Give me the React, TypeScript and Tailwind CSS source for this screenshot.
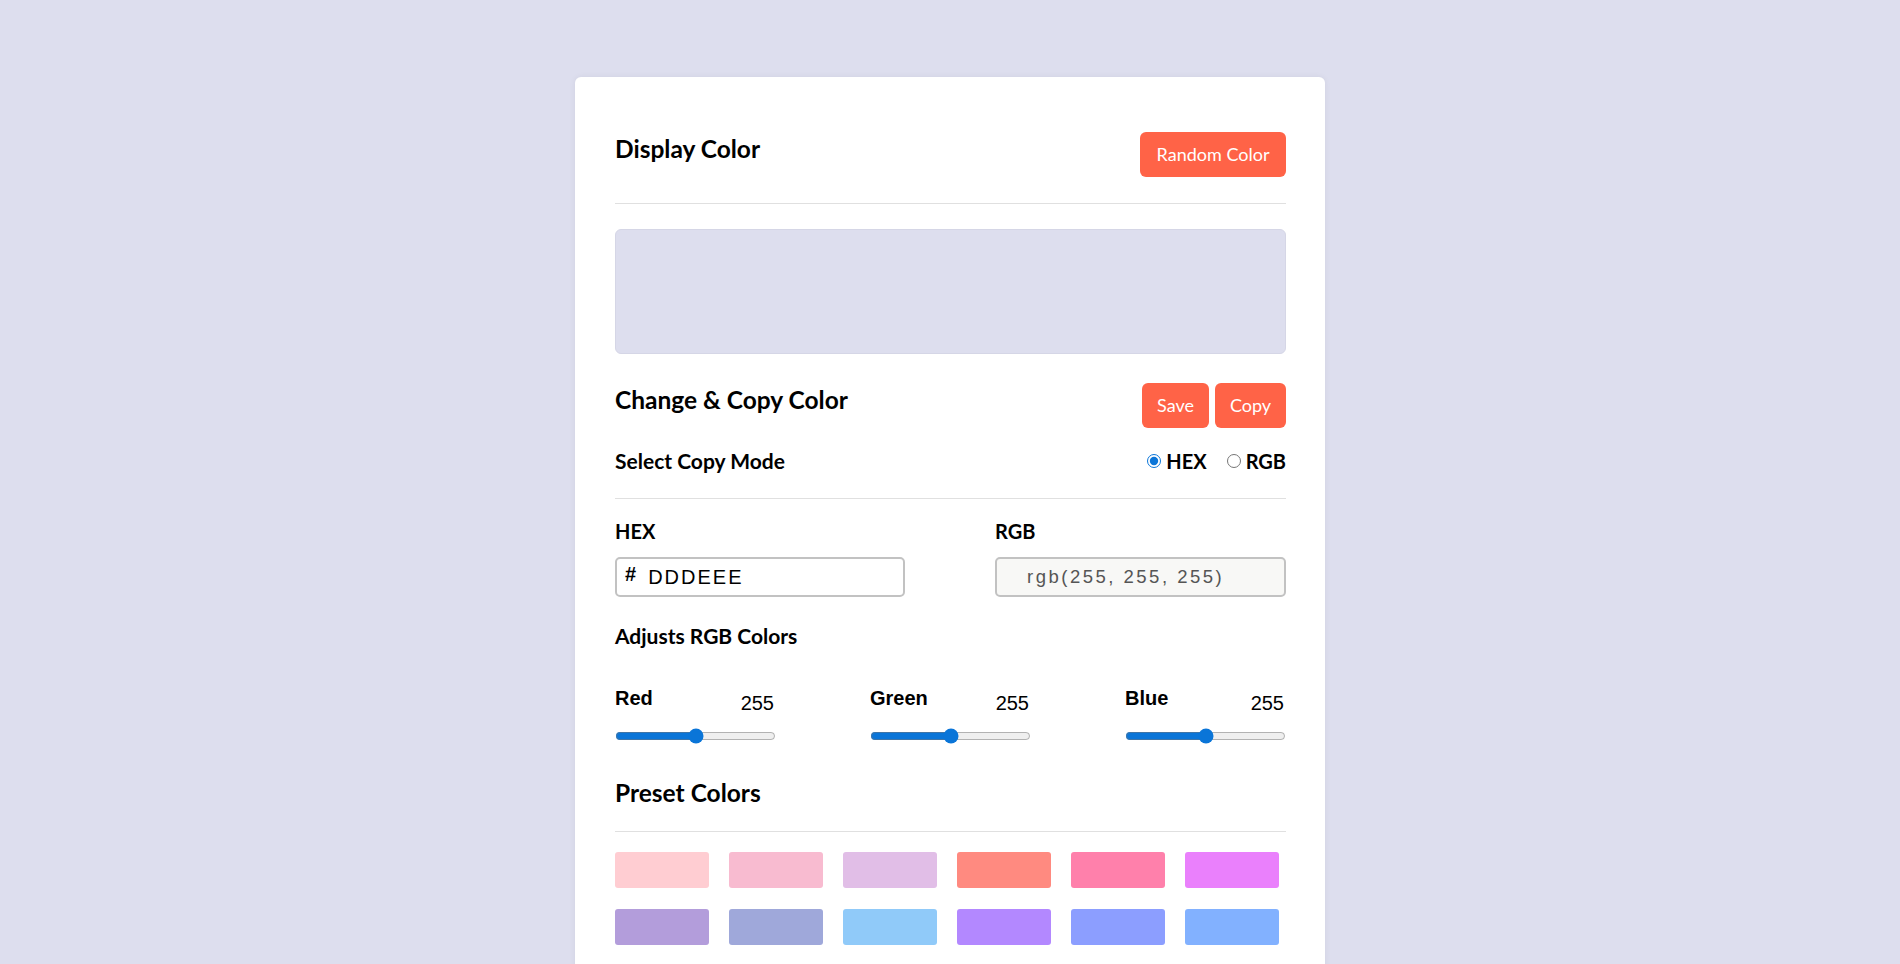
import React, { useState } from 'react';

const PRESETS: string[] = [
  '#ffcdd2',
  '#f8bbd0',
  '#e1bee7',
  '#ff8a80',
  '#ff80ab',
  '#ea80fc',
  '#b39ddb',
  '#9fa8da',
  '#90caf9',
  '#b388ff',
  '#8c9eff',
  '#82b1ff',
];

const CHANNELS = ['Red', 'Green', 'Blue'];

const heading = "font-['Lato','Noto_Sans',sans-serif] font-bold text-black";
const btn =
  "h-[45px] rounded-md bg-[#ff6347] text-white font-['Lato','Noto_Sans',sans-serif] text-[18px] cursor-pointer";

export default function App() {
  const [hex, setHex] = useState<string>('DDDEEE');
  const [mode, setMode] = useState<'hex' | 'rgb'>('hex');

  return (
    <div className="min-h-screen bg-[#dddeee] pt-[77px]">
      <div className="mx-auto w-[750px] rounded-md bg-white pl-10 pr-[39px] pt-[55px] pb-10 shadow-[0_0_6px_rgba(0,0,0,0.06)]">
        {/* 색 표시 */}
        <div className="flex items-start justify-between">
          <h2 className={`${heading} text-[24.5px] leading-[34px]`}>Display Color</h2>
          <button className={`${btn} h-[44px] w-[146px]`}>Random Color</button>
        </div>
        <div className="mt-[26px] border-t border-[#e0e0e0]" />
        <div className="mt-[25px] h-[125px] rounded-md border border-[#d5d6e6] bg-[#dddeee]" />

        {/* 변경 & 복사 */}
        <div className="mt-[29px] flex items-start justify-between">
          <h2 className={`${heading} text-[24.5px] leading-[34px]`}>Change &amp; Copy Color</h2>
          <div className="flex gap-[6px]">
            <button className={`${btn} w-[67px]`}>Save</button>
            <button className={`${btn} w-[71px]`}>Copy</button>
          </div>
        </div>
        <div className="mt-[19px] flex h-[28px] items-center justify-between">
          <span className={`${heading} text-[21px]`}>Select Copy Mode</span>
          <div className={`${heading} flex items-center gap-[20px] text-[20px]`}>
            <label className="flex items-center gap-[5px]">
              <input
                type="radio"
                name="mode"
                checked={mode === 'hex'}
                onChange={() => setMode('hex')}
                className="m-0 h-[14px] w-[14px] accent-[#0a75d8]"
              />
              HEX
            </label>
            <label className="flex items-center gap-[5px]">
              <input
                type="radio"
                name="mode"
                checked={mode === 'rgb'}
                onChange={() => setMode('rgb')}
                className="m-0 h-[14px] w-[14px] accent-[#0a75d8]"
              />
              RGB
            </label>
          </div>
        </div>
        <div className="mt-[23px] border-t border-[#e0e0e0]" />

        <div className="mt-[20px] flex justify-between">
          <div className="w-[290px]">
            <p className={`${heading} text-[20px] leading-[24px]`}>HEX</p>
            <div className="mt-[14px] flex h-[40px] items-center rounded-[5px] border-2 border-[#c2c2c2] bg-white pl-[8px] font-['Liberation_Sans',Arial,sans-serif]">
              <span className="mb-[6px] text-[20px] font-bold text-black">#</span>
              <input
                value={hex}
                onChange={(e) => setHex(e.target.value.toUpperCase())}
                className="ml-[12px] w-full bg-transparent text-[20px] tracking-[2px] text-black outline-none"
              />
            </div>
          </div>
          <div className="w-[291px]">
            <p className={`${heading} text-[20px] leading-[24px]`}>RGB</p>
            <div className="mt-[14px] flex h-[40px] items-center rounded-[5px] border-2 border-[#c2c2c2] bg-[#f8f8f6] pl-[30px] font-['Liberation_Sans',Arial,sans-serif] text-[18.5px] tracking-[2.5px] text-[#555]">
              rgb(255, 255, 255)
            </div>
          </div>
        </div>

        {/* RGB 조절 */}
        <p className={`${heading} mt-[27px] text-[21px] leading-[24px]`}>Adjusts RGB Colors</p>
        <div className="mt-[38px] flex justify-between">
          {CHANNELS.map((channel) => (
            <div key={channel} className="w-[161px]">
              <div className="flex h-[30px] justify-between font-['Liberation_Sans',Arial,sans-serif] text-[20px] text-black">
                <span className="font-bold leading-[24px]">{channel}</span>
                <span className="pr-[2px] pt-[5px] leading-[24px]">255</span>
              </div>
              <div className="mt-[10px] flex h-[20px] items-center">
                <input type="range" min={0} max={510} defaultValue={255} className="m-0 w-full accent-[#0a75d8]" />
              </div>
            </div>
          ))}
        </div>

        {/* 프리셋 */}
        <h2 className={`${heading} mt-[30px] text-[24.5px] leading-[34px]`}>Preset Colors</h2>
        <div className="mt-[21px] border-t border-[#e0e0e0]" />
        <div className="mt-[20px] grid grid-cols-[repeat(6,94px)] gap-x-[20px] gap-y-[21px]">
          {PRESETS.map((color) => (
            <div
              key={color}
              className="h-[36px] cursor-pointer rounded-[3px]"
              style={{ backgroundColor: color }}
              onClick={() => setHex(color.slice(1).toUpperCase())}
            />
          ))}
        </div>
      </div>
    </div>
  );
}
